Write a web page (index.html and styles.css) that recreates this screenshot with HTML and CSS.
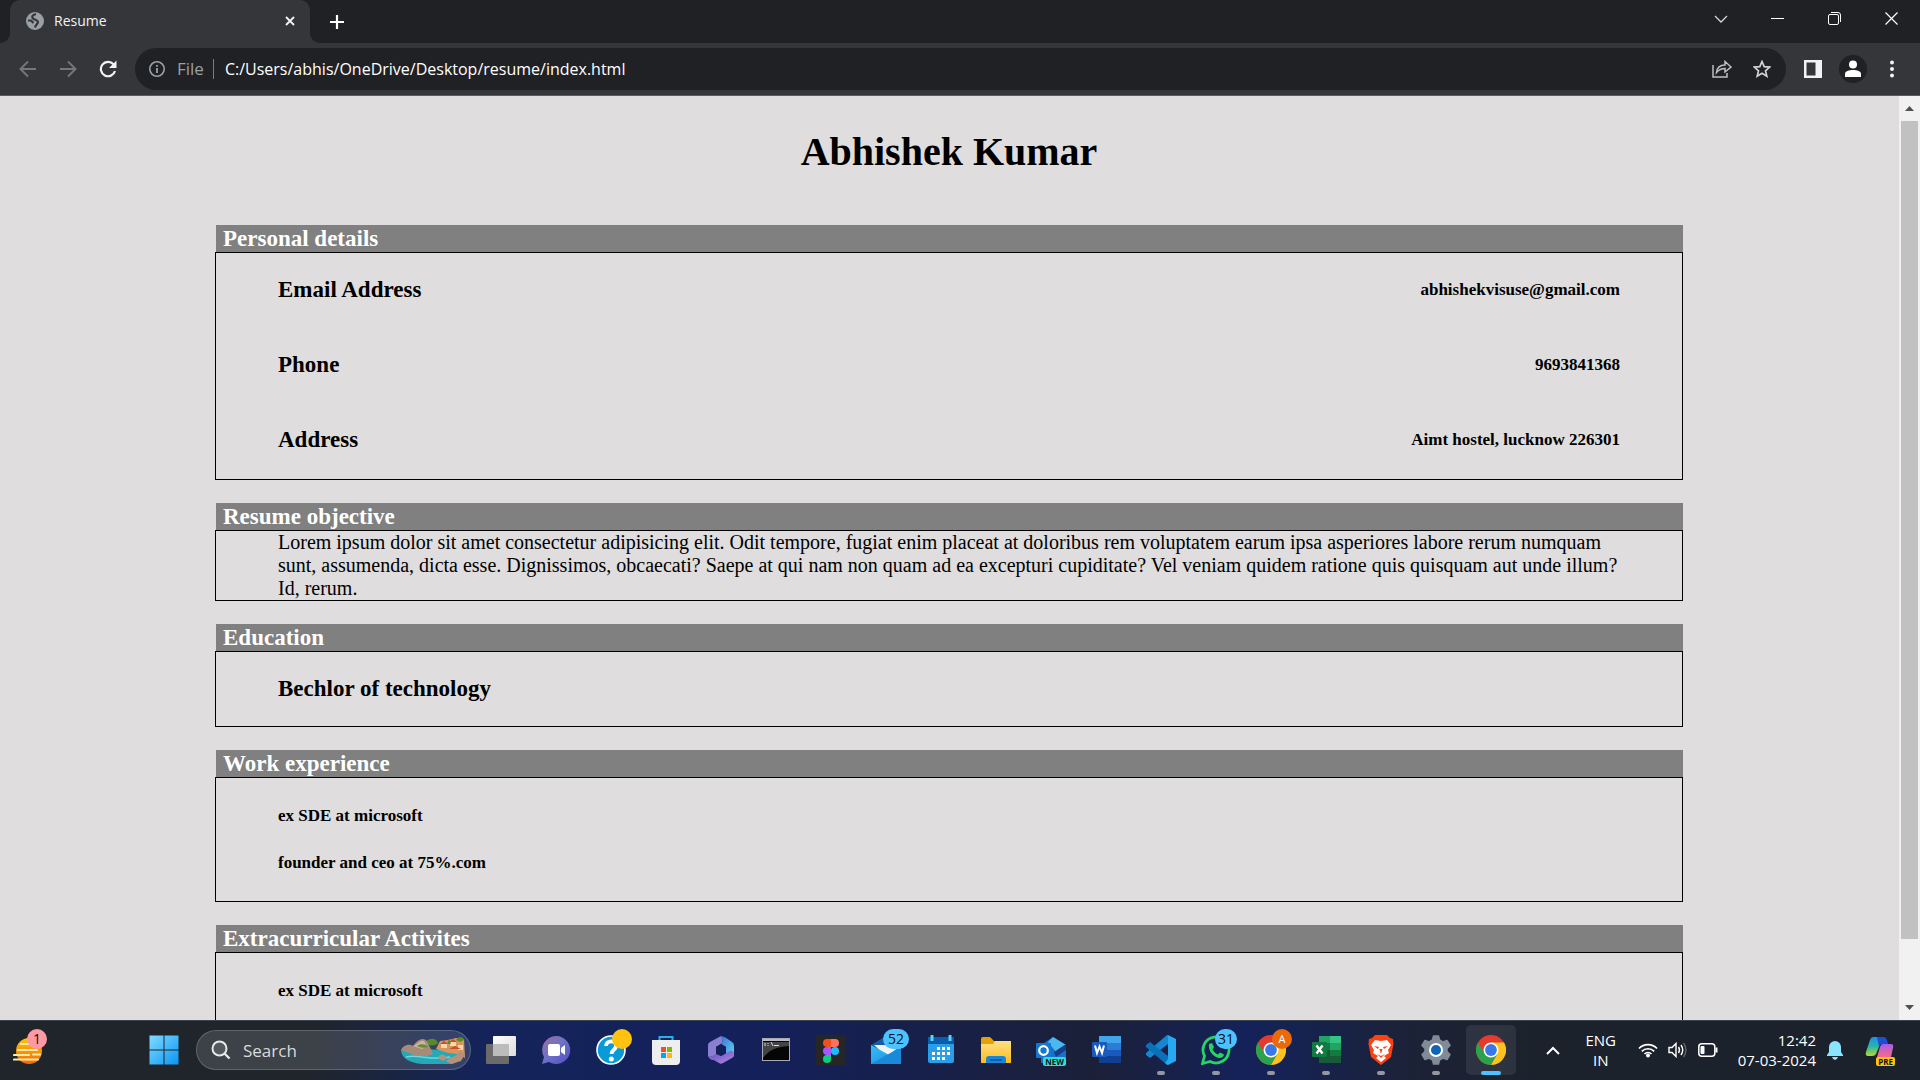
FILE: index.html
```html
<!DOCTYPE html>
<html lang="en">
<head>
<meta charset="utf-8">
<title>Resume</title>
<link rel="stylesheet" href="styles.css">
</head>
<body>
<svg class="defs" aria-hidden="true">
  <defs>
    <linearGradient id="g-start" x2="1" y2="1"><stop stop-color="#7fdcff"/><stop offset="1" stop-color="#0a94f5"/></linearGradient>
    <linearGradient id="g-sun" x2="0" y2="1"><stop stop-color="#ffc400"/><stop offset="1" stop-color="#f26a0c"/></linearGradient>
    <linearGradient id="g-view" x2="1" y2="1"><stop stop-color="#fff"/><stop offset="1" stop-color="#dcdcdc"/></linearGradient>
    <linearGradient id="g-chat" x2="1" y2="1"><stop stop-color="#a06a9e"/><stop offset=".45" stop-color="#6f72c8"/><stop offset="1" stop-color="#4f4fc4"/></linearGradient>
    <linearGradient id="g-folder" x2="0" y2="1"><stop stop-color="#ffe084"/><stop offset="1" stop-color="#fcbc1c"/></linearGradient>
    <linearGradient id="g-mail" x2="1" y2="1"><stop stop-color="#35c0f7"/><stop offset="1" stop-color="#1889dc"/></linearGradient>
    <linearGradient id="g-m1" x2="1" y2="1"><stop stop-color="#5a4fb8"/><stop offset="1" stop-color="#b58ae8"/></linearGradient>
    <linearGradient id="g-m2" x2="1" y2="1"><stop stop-color="#3f6fd8"/><stop offset="1" stop-color="#5bd8f5"/></linearGradient>
    <linearGradient id="g-cop1" x2="0" y2="1"><stop stop-color="#1f8ff0"/><stop offset=".5" stop-color="#2cb5a0"/><stop offset="1" stop-color="#b4d838"/></linearGradient>
    <linearGradient id="g-cop2" x2="0" y2="1"><stop stop-color="#a45df0"/><stop offset="1" stop-color="#fa6a80"/></linearGradient>
    <symbol id="chrome" viewBox="0 0 30 30">
      <circle cx="15" cy="15" r="15" fill="#e33b2e"/>
      <path d="M2 7.500A15 15 0 0 0 15 30L21.500 18.700L15 15L8.500 18.700Z" fill="#2ba24c"/>
      <path d="M15 7.500H28A15 15 0 0 1 15 30L21.500 18.700Z" fill="#fcc31e"/>
      <circle cx="15" cy="15" r="7.500" fill="#fff"/><circle cx="15" cy="15" r="5.900" fill="#3b78e7"/>
    </symbol>
  </defs>
</svg>

<header class="browser">
  <div class="tabstrip">
    <div class="tab">
      <svg width="18" height="18" viewBox="0 0 18 18"><circle cx="9" cy="9" r="9" fill="#9aa0a6"/><path d="M10 2C6 3 5.500 5 7 6.500S12 8 12 10S9.500 12.500 9 15.500M2 8.500H5L7.500 11" fill="none" stroke="#35363a" stroke-width="2.200"/></svg>
      <span class="tab-title">Resume</span>
      <button class="icon-btn" aria-label="Close tab"><svg width="10" height="10" viewBox="0 0 10 10"><path d="M1 1L9 9M9 1L1 9" stroke="#f1f3f4" stroke-width="1.800"/></svg></button>
    </div>
    <button class="icon-btn new-tab" aria-label="New tab"><svg width="16" height="16" viewBox="0 0 16 16"><path d="M8 1V15M1 8H15" stroke="#fff" stroke-width="2.200"/></svg></button>
    <div class="window-controls">
      <button class="icon-btn" aria-label="Search tabs"><svg width="14" height="8" viewBox="0 0 14 8"><path d="M1 1L7 7L13 1" fill="none" stroke="#d5d7da" stroke-width="1.300"/></svg></button>
      <button class="icon-btn" aria-label="Minimize"><svg width="13" height="13" viewBox="0 0 13 13"><path d="M0 6.500H13" stroke="#fff"/></svg></button>
      <button class="icon-btn" aria-label="Restore"><svg width="13" height="13" viewBox="0 0 13 13"><rect x=".5" y="2.500" width="10" height="10" rx="1.500" fill="none" stroke="#fff"/><path d="M3 .500H10A2.500 2.500 0 0 1 12.500 3V10" fill="none" stroke="#fff"/></svg></button>
      <button class="icon-btn" aria-label="Close"><svg width="13" height="13" viewBox="0 0 13 13"><path d="M.5 .5L12.500 12.500M12.500 .5L.5 12.500" stroke="#fff" stroke-width="1.200"/></svg></button>
    </div>
  </div>
  <div class="toolbar">
    <button class="icon-btn nav" aria-label="Back"><svg width="18" height="18" viewBox="0 0 18 18"><path d="M17 9H2M9 1.500L1.500 9L9 16.500" fill="none" stroke="#75777b" stroke-width="1.900"/></svg></button>
    <button class="icon-btn nav" aria-label="Forward"><svg width="18" height="18" viewBox="0 0 18 18"><path d="M1 9H16M9 1.500L16.500 9L9 16.500" fill="none" stroke="#75777b" stroke-width="1.900"/></svg></button>
    <button class="icon-btn nav" aria-label="Reload"><svg width="18" height="18" viewBox="0 0 18 18"><path d="M16 11A7.200 7.200 0 1 1 14.500 4.300" fill="none" stroke="#f1f3f4" stroke-width="2.200"/><path d="M17.500 .500V8H10Z" fill="#f1f3f4"/></svg></button>
    <form class="omnibox">
      <svg width="16" height="16" viewBox="0 0 16 16"><circle cx="8" cy="8" r="7.200" fill="none" stroke="#9aa0a6" stroke-width="1.600"/><path d="M8 7V12M8 4V5.800" stroke="#9aa0a6" stroke-width="1.800"/></svg>
      <label class="scheme" for="url">File</label>
      <input id="url" class="url" type="text" value="C:/Users/abhis/OneDrive/Desktop/resume/index.html">
      <button type="button" class="icon-btn" aria-label="Share"><svg width="20" height="18" viewBox="0 0 20 18"><path d="M1 5V17H15V13" fill="none" stroke="#bdbfc2" stroke-width="1.500"/><path d="M4.500 12.500C5 8 8 5 13 5V1.500L19 7L13 12V8.500C9.500 8.500 7 9.500 4.500 12.500Z" fill="none" stroke="#bdbfc2" stroke-width="1.500"/></svg></button>
      <button type="button" class="icon-btn" aria-label="Bookmark"><svg width="18" height="18" viewBox="0 0 18 18"><path d="M9 1.500L11.200 6.600L16.700 7.100L12.500 10.800L13.800 16.200L9 13.300L4.200 16.200L5.500 10.800L1.300 7.100L6.800 6.600Z" fill="none" stroke="#d0d2d5" stroke-width="1.700"/></svg></button>
    </form>
    <div class="actions">
      <button class="icon-btn" aria-label="Side panel"><svg width="18" height="18" viewBox="0 0 18 18"><rect width="18" height="18" fill="#f1f3f4"/><rect x="2.500" y="2.500" width="9" height="13" fill="#35363a"/></svg></button>
      <button class="icon-btn profile" aria-label="Profile"><svg width="16" height="18" viewBox="0 0 16 18"><circle cx="8" cy="4.500" r="4" fill="#fff"/><path d="M0 17V14C0 11 4 10 8 10S16 11 16 14V17Z" fill="#fff"/></svg></button>
      <button class="icon-btn menu" aria-label="Menu"><svg width="4" height="18" viewBox="0 0 4 18"><circle cx="2" cy="2.500" r="2" fill="#f1f3f4"/><circle cx="2" cy="9" r="2" fill="#f1f3f4"/><circle cx="2" cy="15.500" r="2" fill="#f1f3f4"/></svg></button>
    </div>
  </div>
</header>

<div class="viewport">
  <main class="resume">
    <h1>Abhishek Kumar</h1>
    <section>
      <h2>Personal details</h2>
      <dl class="box details">
        <div class="row"><dt>Email Address</dt><dd>abhishekvisuse@gmail.com</dd></div>
        <div class="row"><dt>Phone</dt><dd>9693841368</dd></div>
        <div class="row"><dt>Address</dt><dd>Aimt hostel, lucknow 226301</dd></div>
      </dl>
    </section>
    <section>
      <h2>Resume objective</h2>
      <p class="box">Lorem ipsum dolor sit amet consectetur adipisicing elit. Odit tempore, fugiat enim placeat at doloribus rem voluptatem earum ipsa asperiores labore rerum numquam sunt, assumenda, dicta esse. Dignissimos, obcaecati? Saepe at qui nam non quam ad ea excepturi cupiditate? Vel veniam quidem ratione quis quisquam aut unde illum? Id, rerum.</p>
    </section>
    <section>
      <h2>Education</h2>
      <div class="box"><h3 class="row">Bechlor of technology</h3></div>
    </section>
    <section>
      <h2>Work experience</h2>
      <ul class="box entries"><li>ex SDE at microsoft</li><li>founder and ceo at 75%.com</li></ul>
    </section>
    <section>
      <h2>Extracurricular Activites</h2>
      <ul class="box entries"><li>ex SDE at microsoft</li></ul>
    </section>
  </main>
  <div class="scrollbar">
    <button class="arrow" aria-label="Scroll up"><svg width="9" height="5" viewBox="0 0 9 5"><path d="M0 5L4.500 0L9 5Z" fill="#505050"/></svg></button>
    <div class="thumb"></div>
    <div class="rest"></div>
    <button class="arrow" aria-label="Scroll down"><svg width="9" height="5" viewBox="0 0 9 5"><path d="M0 0L4.500 5L9 0Z" fill="#505050"/></svg></button>
  </div>
</div>

<footer class="taskbar">
  <button class="task widgets" aria-label="Weather"><svg width="30" height="30" viewBox="0 0 30 30"><circle cx="16" cy="16" r="13" fill="url(#g-sun)"/><path d="M8 9H20M5 15H16M20 19.500H27M1 20H16M1 24.500H25M5 15H24" stroke="#ffe9a8" stroke-width="2.200" stroke-linecap="round"/></svg><span class="badge pink">1</span></button>
  <button class="task" aria-label="Start"><svg width="30" height="30" viewBox="0 0 30 30"><path d="M.5 .5H14.500V14.500H.5ZM15.500 .5H29.500V14.500H15.500ZM.5 15.500H14.500V29.500H.5ZM15.500 15.500H29.500V29.500H15.500Z" fill="url(#g-start)"/></svg></button>
  <label class="search">
    <svg width="20" height="20" viewBox="0 0 20 20"><circle cx="8.500" cy="8.500" r="7" fill="#ffffff20" stroke="#e8e8e8" stroke-width="2"/><path d="M13.500 13.500L18.500 18.500" stroke="#e8e8e8" stroke-width="2.400"/></svg>
    <input type="text" placeholder="Search" aria-label="Search">
    <svg width="66" height="28" viewBox="0 0 66 28"><path d="M1 14C12 11 40 15 64 14C65 20 60 26 52 28H22C10 27 1 22 1 14Z" fill="#23a9b8"/><path d="M6 21C20 18 30 25 50 21" fill="none" stroke="#6fd7dc" stroke-width="1.500"/><path d="M36 13L40 5L48 4L56 2L64 3L65 22L58 18L48 17Z" fill="#d99560"/><path d="M41 8H47V12H41ZM50 6H56V10H50ZM58 9H63V14H58Z" fill="#f7d7a6"/><path d="M40 8L44 5L48 8ZM49 6L53 3L57 6ZM49 13L55 10L61 13Z" fill="#c84f2a"/><path d="M26 6C29 1 37 2 38 7C36 10 28 11 26 6ZM56 4C58 0 63 0 64 4L60 6ZM47 8L49 3L51 8Z" fill="#568b25"/><path d="M1 14C4 8 10 8 13 10C18 3 23 1 27 5C29 10 32 14 33 18C25 22 15 20 9 17Z" fill="#a68b7b"/><path d="M13 10C18 8 20 4 24 5L27 10L22 13Z" fill="#cab5a3"/><path d="M17 10C20 7 27 8 28 11C24 12 20 12 17 10Z" fill="#668d2e"/><path d="M38 22C40 17 45 18 47 22L43 25ZM46 25C50 20 56 22 60 15L65 18L61 25L51 28Z" fill="#b79278"/></svg>
  </label>
  <nav class="apps" aria-label="Apps">
    <button class="task" aria-label="Task view"><svg width="30" height="30" viewBox="0 0 30 30"><rect y="9" width="23" height="20" rx="1" fill="#6b6b6b"/><rect x="7" y="1" width="23" height="20" rx="1" fill="url(#g-view)"/><path d="M7 9H23V21H7Z" fill="#bcbcbc"/></svg></button>
    <button class="task" aria-label="Chat"><svg width="30" height="30" viewBox="0 0 30 30"><path d="M15 1A14 14 0 1 1 8 27L1 29L3 22A14 14 0 0 1 15 1Z" fill="url(#g-chat)"/><rect x="7" y="9" width="12" height="12" rx="2" fill="#fff"/><path d="M20 13L24 10V20L20 17Z" fill="#fff"/></svg></button>
    <button class="task" aria-label="Get help"><svg width="30" height="30" viewBox="0 0 30 30"><circle cx="15" cy="15" r="14" fill="#0a9ad8" stroke="#fff" stroke-width="1.600"/><path d="M10 11C10 4.500 20.500 5 20 11C20 15 15.500 14.500 15.500 19" fill="none" stroke="#fff" stroke-width="3.800"/><circle cx="15.300" cy="24" r="2.500" fill="#fff"/></svg><span class="badge yellow"></span></button>
    <button class="task" aria-label="Store"><svg width="30" height="30" viewBox="0 0 30 30"><path d="M8.500 6V2H21.500V6" fill="none" stroke="#26b1ee" stroke-width="2"/><path d="M1 5H29V26Q29 30 25 30H5Q1 30 1 26Z" fill="#eee"/><path d="M10 12H15V17H10Z" fill="#f25022"/><path d="M16 12H21V17H16Z" fill="#7fba00"/><path d="M10 18H15V23H10Z" fill="#00a4ef"/><path d="M16 18H21V23H16Z" fill="#ffb900"/></svg></button>
    <button class="task" aria-label="Microsoft 365"><svg width="30" height="30" viewBox="0 0 30 30"><path d="M15 1L4 7Q2 8 2 10V21Q3 24 7 25L11 22Q10 21 10 19V12L15 9Q18 6 15 1Z" fill="#8c7fd0"/><path d="M15 1Q18 1 26 7Q28 8 28 11V20Q27 23 25 22L20 19V12L15 9Q18 6 15 1Z" fill="url(#g-m2)"/><path d="M2 20Q4 23 10 19L15 21L24 16Q28 15 28 20Q28 22 26 23L17 28Q15 29.500 13 28L4 23Q2 22 2 20Z" fill="url(#g-m1)"/><path d="M10 12L15 9L20 12V18L15 21L10 18Z" fill="#14205a"/></svg></button>
    <button class="task" aria-label="Command Prompt"><svg width="30" height="30" viewBox="0 0 30 30"><rect x="1.500" y="3.500" width="27" height="22" fill="#050505" stroke="#a8abb2"/><path d="M2 4H28V6H2Z" fill="#b9bcc4"/><path d="M2 7H28V11C14 12 8 15 2 23Z" fill="#444"/><path d="M4 8V11M7 8V9M7 10V11M10 7L12 11M13 10.500H18" stroke="#ddd"/></svg></button>
    <button class="task" aria-label="Figma"><svg width="30" height="30" viewBox="0 0 30 30"><rect width="30" height="30" rx="2" fill="#262626"/><path d="M15 4H11A4 4 0 0 0 11 12H15Z" fill="#f24e1e"/><path d="M15 4H19A4 4 0 0 1 19 12H15Z" fill="#ff7262"/><path d="M15 12H11A4 4 0 0 0 11 20H15Z" fill="#a259ff"/><circle cx="19" cy="16" r="4" fill="#1abcfe"/><path d="M15 20H11A4 4 0 1 0 15 24Z" fill="#0acf83"/></svg></button>
    <button class="task" aria-label="Mail"><svg width="30" height="30" viewBox="0 0 30 30"><path d="M0 10L15 1L30 10V20H0Z" fill="#145d9f"/><path d="M3 10H27V18L15 21Z" fill="#f2f2f2"/><path d="M0 10L18 20L30 10V29H0Z" fill="url(#g-mail)"/><path d="M0 29L30 12V29Z" fill="#1989d8"/></svg><span class="badge blue wide">52</span></button>
    <button class="task" aria-label="Calendar"><svg width="30" height="30" viewBox="0 0 30 30"><rect x="2" y="2" width="26" height="26" rx="2" fill="#2a9fe8"/><path d="M2 9V4Q2 2 4 2H26Q28 2 28 4V9Z" fill="#0c5cab"/><path d="M6 0V6M24 0V6" stroke="#58d4fa" stroke-width="3"/><path d="M11 13.500H24M6 18.500H24M6 23.500H19" stroke="#fff" stroke-width="3" stroke-dasharray="3 2"/></svg></button>
    <button class="task" aria-label="File Explorer"><svg width="30" height="30" viewBox="0 0 30 30"><path d="M0 4Q0 2 2 2H9L13 6H28V15H0Z" fill="#e3a008"/><path d="M0 9H12L14 6H30V28H0Z" fill="url(#g-folder)"/><path d="M5 28V24Q5 21 8 21H22Q25 21 25 24V28Z" fill="#1a86d9"/><path d="M9 25H21" stroke="#0b559c" stroke-width="1.500"/></svg></button>
    <button class="task" aria-label="Outlook"><svg width="30" height="30" viewBox="0 0 30 30"><path d="M5 10L17 2L30 10V28H5Z" fill="#1a70c9"/><path d="M12 7L17 2L30 10L20 17Z" fill="#4bb8f2"/><path d="M18 17L30 9V15L20 22Z" fill="#123f86"/><rect y="8" width="15" height="15" rx="1" fill="#1377d3"/><circle cx="7.500" cy="15.500" r="4.300" fill="none" stroke="#fff" stroke-width="2.200"/></svg><span class="tag teal">NEW</span></button>
    <button class="task" aria-label="Word"><svg width="30" height="30" viewBox="0 0 30 30"><path d="M8 1H30V8H8Z" fill="#41a5ee"/><path d="M8 8H30V15H8Z" fill="#2b7cd3"/><path d="M8 15H30V21H8Z" fill="#185abd"/><path d="M8 21H30V28H8Z" fill="#103f91"/><rect x="1" y="7" width="15" height="15" rx="1" fill="#185abd"/><path d="M4 10.500L6 18L8.500 11.500L11 18L13 10.500" fill="none" stroke="#fff" stroke-width="2"/></svg></button>
    <button class="task running" aria-label="Visual Studio Code"><svg width="30" height="30" viewBox="0 0 30 30"><path d="M22 0V9L4 23L0 20V18L21 0Z" fill="#1686d0"/><path d="M22 30V21L4 7L0 10V12L21 30Z" fill="#0b70ba"/><path d="M22 0L30 4V26L22 30L19 28L22 24Z" fill="#28a8f0"/></svg></button>
    <button class="task running" aria-label="WhatsApp"><svg width="30" height="30" viewBox="0 0 30 30"><path d="M1.500 28.500L3.500 21A13 13 0 1 1 9 26.500Z" fill="none" stroke="#25d366" stroke-width="2.800"/><path d="M8 9L11 8L13 12L11.500 14.500C13 17 14.500 18.500 17 19.500L19 17.500L23 19.500C22.500 23 19 24 15 22C11 20 7 15 8 9Z" fill="#25d366"/></svg><span class="badge blue">31</span></button>
    <button class="task running" aria-label="Chrome, profile A"><svg width="30" height="30"><use href="#chrome"/></svg><span class="badge orange">A</span></button>
    <button class="task running" aria-label="Excel"><svg width="30" height="30" viewBox="0 0 30 30"><path d="M8 1H19V8H8Z" fill="#21a366"/><path d="M19 1H30V8H19Z" fill="#33c481"/><path d="M8 8H19V15H8Z" fill="#107c41"/><path d="M19 8H30V15H19Z" fill="#21a366"/><path d="M8 15H19V28H8Z" fill="#185c37"/><path d="M19 15H30V21H19Z" fill="#107c41"/><path d="M19 21H30V28H19Z" fill="#185c37"/><rect x="1" y="7" width="15" height="15" rx="1" fill="#107c41"/><path d="M5.500 10.500L11.500 18.500M11.500 10.500L5.500 18.500" stroke="#fff" stroke-width="2.400"/></svg></button>
    <button class="task running" aria-label="Brave"><svg width="30" height="30" viewBox="0 0 30 30"><path d="M9 0H21L24 3L27 4L27.500 9L25 22L15 30L5 22L2.500 9L3 4L6 3Z" fill="#fa4214"/><path d="M9 5L15 6L21 5L25 10L22 15L23 18L18 21L20 23L15 27L10 23L12 21L7 18L8 15L5 10Z" fill="#fff"/><path d="M8 11L13 12L12 14ZM22 11L17 12L18 14ZM13.500 14H16.500L15 19ZM11 19L15 21L19 19L15 23Z" fill="#fa4214"/></svg></button>
    <button class="task running" aria-label="Settings"><svg width="30" height="30" viewBox="0 0 30 30"><path d="M11.500 5L12.500 1H17.500L18.500 5L22 7L26 5.500L29 10.500L26 13.500V16.500L29 19.500L26 24.500L22 23L18.500 25L17.500 29H12.500L11.500 25L8 23L4 24.500L1 19.500L4 16.500V13.500L1 10.500L4 5.500L8 7Z" fill="#7f8b96" stroke="#7f8b96" stroke-width="1.500" stroke-linejoin="round"/><circle cx="15" cy="15" r="7" fill="#fff"/><circle cx="15" cy="15" r="5" fill="#0f64b4"/></svg></button>
    <button class="task running active" aria-label="Chrome"><svg width="30" height="30"><use href="#chrome"/></svg></button>
  </nav>
  <div class="tray">
    <button class="icon-btn" aria-label="Hidden icons"><svg width="14" height="9" viewBox="0 0 14 9"><path d="M1 8L7 2L13 8" fill="none" stroke="#fff" stroke-width="2"/></svg></button>
    <button class="lang"><span>ENG</span><span>IN</span></button>
    <button class="status" aria-label="Network, volume, battery">
      <svg width="20" height="16" viewBox="0 0 20 16"><path d="M1 6.500A12.500 12.500 0 0 1 19 6.500M3.800 9.300A8.800 8.800 0 0 1 16.200 9.300M6.500 12A5 5 0 0 1 13.500 12" fill="none" stroke="#fff" stroke-width="1.700"/><circle cx="10" cy="13.500" r="2" fill="#fff"/></svg>
      <svg width="20" height="16" viewBox="0 0 20 16"><path d="M1 5.500H4L8 1.500V14.500L4 10.500H1Z" fill="none" stroke="#fff" stroke-width="1.400"/><path d="M10.500 5Q12.500 8 10.500 11M13 3Q16.500 8 13 13" fill="none" stroke="#fff" stroke-width="1.400"/><path d="M15.500 1Q20.500 8 15.500 15" fill="none" stroke="#62666c" stroke-width="1.300"/></svg>
      <svg width="20" height="14" viewBox="0 0 20 14"><rect x=".8" y=".8" width="16" height="12.400" rx="3" fill="none" stroke="#fff" stroke-width="1.500"/><rect x="2.500" y="3" width="4" height="8" rx="1" fill="#fff"/><path d="M18.500 4.500V9.500" stroke="#fff" stroke-width="2"/></svg>
    </button>
    <button class="clock"><span>12:42</span><span>07-03-2024</span></button>
    <button class="icon-btn" aria-label="Notifications"><svg width="18" height="20" viewBox="0 0 18 20"><path d="M1 15L3 12V7A6 6 0 0 1 15 7V12L17 15V16H1Z" fill="#8be4fd"/><path d="M6 17H12Q11 20 9 20T6 17Z" fill="#8be4fd"/></svg></button>
    <button class="task copilot" aria-label="Copilot"><svg width="30" height="30" viewBox="0 0 30 30"><path d="M8 2H18L11 19Q10 21 7 21H3Q0 21 1 17L5 5Q6 2 8 2Z" fill="url(#g-cop1)"/><path d="M12 2H19Q21 2 22 5L23 9H18Q15 9 14 12Z" fill="#1e4fd0"/><path d="M18 9H26Q29 9 28 13L26 22H12L15 12Q16 9 18 9Z" fill="url(#g-cop2)"/></svg><span class="tag gold">PRE</span></button>
  </div>
</footer>
</body>
</html>
```
FILE: styles.css
```css
* { box-sizing: border-box; }
body {
  margin: 0;
  height: 100vh;
  display: flex;
  flex-direction: column;
  overflow: hidden;
  font-family: "Open Sans", "Noto Sans", sans-serif;
}
button { border: 0; padding: 0; background: none; color: inherit; font: inherit; }
svg { display: block; flex: none; }
.defs { position: absolute; width: 0; height: 0; }
.icon-btn { display: grid; place-items: center; flex: none; }

/* browser frame */
.browser { flex: none; background: #35363a; border-bottom: 1px solid #5a5b5f; }
.tabstrip { display: flex; align-items: center; height: 43px; background: #202124; padding-left: 10px; }
.tab {
  position: relative;
  display: flex;
  align-items: center;
  gap: 10px;
  width: 300px;
  height: 43px;
  padding: 0 15px 2px 16px;
  border-radius: 10px 10px 0 0;
  background: #35363a;
  color: #f1f3f4;
  font-size: 14px;
}
.tab::before, .tab::after {
  content: "";
  position: absolute;
  bottom: 0;
  width: 10px;
  height: 10px;
}
.tab::before { right: 100%; background: radial-gradient(circle at 0 0, #202124 10px, #35363a 10px); }
.tab::after { left: 100%; background: radial-gradient(circle at 100% 0, #202124 10px, #35363a 10px); }
.tab-title { flex: 1; }
.new-tab { width: 54px; height: 43px; }
.window-controls { display: flex; align-self: flex-start; margin-left: auto; }
.window-controls .icon-btn { width: 57px; height: 37px; }
.toolbar { display: flex; align-items: center; height: 52px; padding-left: 8px; }
.nav { width: 40px; height: 40px; }
.omnibox {
  flex: 1;
  display: flex;
  align-items: center;
  height: 42px;
  margin: 0 0 0 7px;
  padding: 0 14px;
  border-radius: 21px;
  background: #202124;
  color: #9aa0a6;
  font-size: 17px;
}
.scheme { margin-left: 12px; padding-right: 9px; border-right: 1px solid #7a7d82; line-height: 20px; }
.url {
  flex: 1;
  min-width: 0;
  padding: 0 0 0 11px;
  border: 0;
  outline: 0;
  background: none;
  color: #fff;
  font: inherit;
  font-size: 16px;
}
.omnibox .icon-btn { width: 20px; margin-left: 20px; }
.actions { display: flex; align-items: center; padding-left: 18px; padding-right: 26px; gap: 17px; }
.menu { margin-left: 6px; }
.profile { width: 28px; height: 28px; border-radius: 50%; background: #202124; }

/* page */
.viewport { flex: 1; min-height: 0; display: flex; background: #dfdddd; }
.resume {
  flex: 1;
  overflow: hidden;
  padding: 33px 216px 0 215px;
  color: #000;
  font-family: "Liberation Serif", "Times New Roman", serif;
  font-size: 20px;
}
h1, h2, h3, p, dl, dd, ul { margin: 0; padding: 0; }
h1 { margin-bottom: 50px; text-align: center; font-size: 40px; line-height: 46px; }
section { margin-bottom: 23px; }
h2 {
  margin-left: 1px;
  padding-left: 7px;
  background: #808080;
  color: #fff;
  font-size: 23px;
  line-height: 27px;
}
.box { padding: 0 62px; border: 1px solid #000; line-height: 23px; }
.row {
  display: flex;
  justify-content: space-between;
  align-items: center;
  padding: 23px 0 24px;
  font-size: 23px;
  font-weight: bold;
  line-height: 27px;
}
.details { display: grid; gap: 1px; padding-bottom: 2px; }
.row dd, .entries { font-size: 17px; font-weight: bold; }
.entries { display: grid; gap: 28px; padding: 28px 62px 29px; line-height: 19px; list-style: none; }
.scrollbar { display: flex; flex-direction: column; width: 21px; padding: 0 2px; background: #f1f1f1; }
.arrow { display: grid; place-items: center; height: 25px; }
.thumb { flex: 818; background: #c1c1c1; }
.rest { flex: 56; }

/* taskbar */
.taskbar {
  flex: none;
  display: flex;
  align-items: center;
  height: 60px;
  padding-bottom: 1px;
  border-top: 1px solid #3a444c;
  background: linear-gradient(90deg, #1f252b 16%, #14245a 25%, #14205a 40%, #1b2038 57%, #14225a 65%, #1c2236 74%, #1c222c 80%);
  color: #fff;
  font-size: 15px;
}
.task { position: relative; display: grid; place-items: center; flex: none; width: 55px; height: 50px; }
.widgets { margin-right: 81px; }
.search {
  display: flex;
  align-items: center;
  gap: 12px;
  width: 275px;
  height: 40px;
  margin-left: 5px;
  padding: 0 4px 0 14px;
  border: 1px solid #ffffff30;
  border-radius: 20px;
  background: #ffffff22;
}
.search input { flex: 1; min-width: 0; padding: 0; border: 0; outline: 0; background: none; color: #fff; font: inherit; font-size: 17px; }
.search input::placeholder { color: #d9dadd; opacity: 1; }
.apps { display: flex; margin-left: 2px; }
.badge {
  position: absolute;
  top: 4px;
  right: 6px;
  min-width: 20px;
  height: 20px;
  border-radius: 10px;
  color: #111;
  font-size: 14px;
  line-height: 20px;
  text-align: center;
}
.wide { width: 26px; right: 4px; }
.blue { background: #4cc2ff; min-width: 22px; }
.pink { background: #ff99a4; right: 8px; }
.yellow { background: #ffc20e; }
.orange { background: #ea6a0a; color: #fff; font-size: 11px; }
.tag { position: absolute; right: 12px; bottom: 9px; padding: 0 2px; border-radius: 2px; color: #111; font-size: 8px; font-weight: bold; line-height: 9px; }
.teal { background: #2be0dc; }
.gold { background: #fdc50f; }
.running::after {
  content: "";
  position: absolute;
  bottom: 0;
  left: 50%;
  width: 8px;
  height: 4px;
  margin-left: -4px;
  border-radius: 2px;
  background: #9597a2;
}
.active { width: 50px; margin-left: 3px; border-radius: 5px; background: #ffffff14; }
.active::after { width: 20px; margin-left: -10px; background: #4cc2ff; }
.tray { display: flex; align-items: center; margin-left: auto; line-height: 20px; }
.lang, .clock { display: grid; }
.lang { width: 50px; margin-left: 16px; }
.status { display: flex; align-items: center; gap: 10px; margin-left: 12px; }
.clock { text-align: right; margin: 0 10px 0 20px; }
.copilot { margin: 0 13px 0 8px; }
```
